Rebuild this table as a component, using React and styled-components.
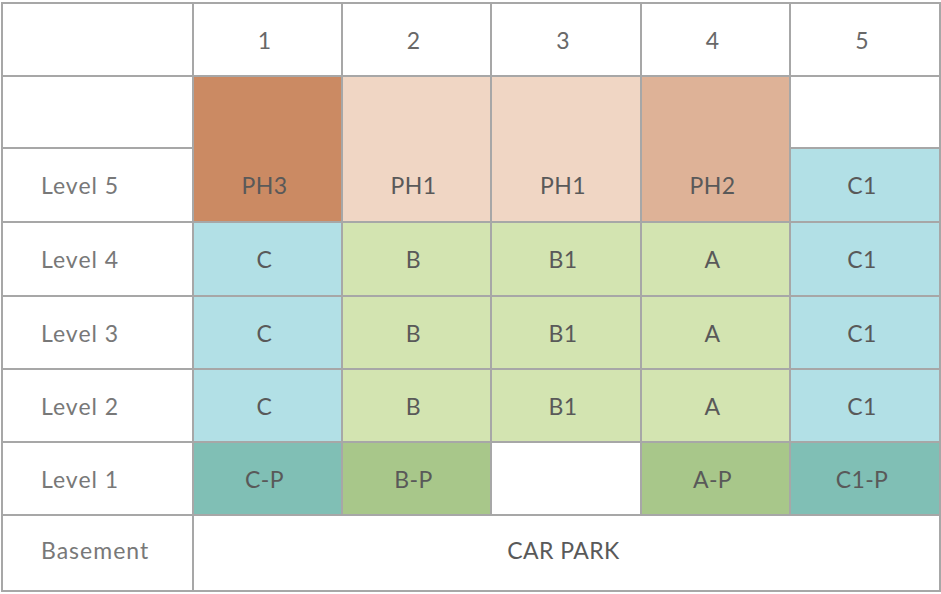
import React from "react";
import styled, { createGlobalStyle } from "styled-components";

const GlobalStyle = createGlobalStyle`
    body {
        margin: 0;
        background: #ffffff;
        font-family: Lato, "Liberation Sans", sans-serif;
    }
`;

const Grid = styled.div`
    display: grid;
    grid-template-columns: 189px 147px 147px 148px 147px 148px;
    grid-template-rows: 71px 70px 72px 72px 71px 71px 71px 74px;
    gap: 2px;
    padding: 2px;
    width: max-content;
    margin: 2px 0 0 1px;
    background: #a7a7a7;
`;

const Cell = styled.div`
    grid-column: ${(p) => p.$col || "auto"};
    grid-row: ${(p) => p.$row || "auto"};
    background: ${(p) => p.$bg || "#ffffff"};
    display: flex;
    align-items: center;
    justify-content: center;
    padding: 0 6px ${(p) => p.$lift || 0}px 0;
    font-size: 23px;
    color: #595959;
    letter-spacing: 0.4px;
`;

const Label = styled(Cell)`
    justify-content: flex-start;
    padding-left: 38px;
    padding-right: 0;
    color: #787878;
    letter-spacing: 1px;
`;

const Head = styled(Cell)`
    color: #686868;
`;

// penthouse blocks span two rows but the name sits in the Level 5 row
const Tall = styled(Cell)`
    align-items: flex-end;

    & > span {
        height: 72px;
        display: flex;
        align-items: center;
    }
`;

const colors = {
    PH3: "#cb8a63",
    PH1: "#f0d6c4",
    PH2: "#deb297",
    C: "#b2e0e6",
    B: "#d3e4b1",
    CP: "#80bfb5",
    BP: "#a8c78a",
};

const floors = [
    { label: "Level 4", cells: ["C", "B", "B1", "A", "C1"] },
    { label: "Level 3", cells: ["C", "B", "B1", "A", "C1"] },
    { label: "Level 2", cells: ["C", "B", "B1", "A", "C1"] },
];

const bgFor = (name) => (name.startsWith("C") ? colors.C : colors.B);

function App() {
    return (
        <>
            <GlobalStyle />
            <Grid>
                <Head />
                {[1, 2, 3, 4, 5].map((n) => (
                    <Head key={n}>{n}</Head>
                ))}

                <Label />
                <Tall $row="span 2" $bg={colors.PH3}><span>PH3</span></Tall>
                <Tall $row="span 2" $bg={colors.PH1}><span>PH1</span></Tall>
                <Tall $row="span 2" $bg={colors.PH1}><span>PH1</span></Tall>
                <Tall $row="span 2" $bg={colors.PH2}><span>PH2</span></Tall>
                <Cell />
                <Label $col="1">Level 5</Label>
                <Cell $bg={colors.C}>C1</Cell>

                {floors.map((f) => (
                    <React.Fragment key={f.label}>
                        <Label>{f.label}</Label>
                        {f.cells.map((c, i) => (
                            <Cell key={i} $bg={bgFor(c)}>{c}</Cell>
                        ))}
                    </React.Fragment>
                ))}

                <Label>Level 1</Label>
                <Cell $bg={colors.CP}>C-P</Cell>
                <Cell $bg={colors.BP}>B-P</Cell>
                <Cell />
                <Cell $bg={colors.BP}>A-P</Cell>
                <Cell $bg={colors.CP}>C1-P</Cell>

                <Label $lift={6}>Basement</Label>
                <Cell $col="span 5" $lift={6}>CAR PARK</Cell>
            </Grid>
        </>
    );
}

export default App;
